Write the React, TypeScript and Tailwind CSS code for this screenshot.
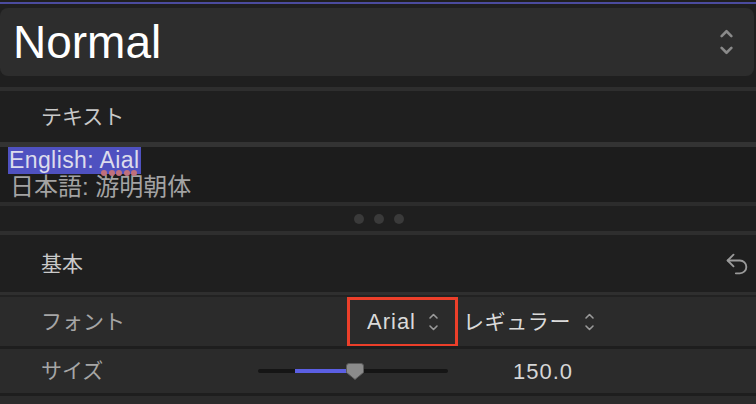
import React from 'react';

const latin = { fontFamily: '"Liberation Sans", Arial, sans-serif' };
const jp = { fontFamily: '"Liberation Sans", "Noto Sans CJK JP", sans-serif' };

function UpDown({ className = '' }: { className?: string }) {
  return (
    <svg viewBox="0 0 12 26" fill="none" stroke="currentColor" strokeWidth="2.4" strokeLinecap="round" strokeLinejoin="round" className={className}>
      <path d="M1.5 7.5 6 3l4.5 4.5" />
      <path d="M1.5 18.5 6 23l4.5-4.5" />
    </svg>
  );
}

function SmallUpDown({ className = '' }: { className?: string }) {
  return (
    <svg viewBox="0 0 10 20" fill="none" stroke="currentColor" strokeWidth="1.6" strokeLinecap="round" strokeLinejoin="round" className={className}>
      <path d="M1.5 6 5 2.5 8.5 6" />
      <path d="M1.5 14 5 17.5 8.5 14" />
    </svg>
  );
}

function UndoIcon({ className = '' }: { className?: string }) {
  return (
    <svg viewBox="0 0 24 24" fill="none" stroke="currentColor" strokeWidth="1.6" strokeLinecap="round" strokeLinejoin="round" className={className}>
      <path d="M9 14 4 9l5-5" />
      <path d="M4 9h10.5a5.5 5.5 0 0 1 5.5 5.5a5.5 5.5 0 0 1-5.5 5.5H11" />
    </svg>
  );
}

function SliderThumb() {
  return (
    <svg viewBox="0 0 18 17" className="absolute left-[88px] top-[4px] w-[18px] h-[17px]">
      <path d="M3 0.5h12a2.5 2.5 0 0 1 2.5 2.5v6.5L9 16.5 0.5 9.5V3A2.5 2.5 0 0 1 3 0.5z" fill="#8b8b8b" stroke="#5a5a5a" strokeWidth="1" />
    </svg>
  );
}

export default function App() {
  return (
    <div className="w-[756px] h-[404px] overflow-hidden bg-[#1f1f1f] flex flex-col" style={jp}>
      {/* top accent */}
      <div className="h-[2px] mt-[2px] bg-[#4b4b9e]" />

      {/* style dropdown */}
      <div className="mt-[4px] mr-[2px] h-[68px] rounded-[8px] bg-[#2d2d2d] flex items-center justify-between pl-[13px] pr-[21px]">
        <span className="text-[46px] leading-none text-white" style={latin}>Normal</span>
        <UpDown className="w-[13px] h-[28px] text-[#8a8a8a]" />
      </div>

      <div className="mt-[11px] h-[4px] bg-[#2e2e2e]" />

      {/* text section header */}
      <div className="h-[51px] flex items-center pl-[41px] text-[21px] text-[#c9c9c9]">テキスト</div>
      <div className="h-[5px] bg-[#333333]" />

      {/* text editor */}
      <div className="h-[55px] bg-[#1c1c1c] flex flex-col">
        <div className="h-[27px] flex">
          <span className="relative ml-[8px] h-[27px] px-[1px] bg-[#4f51c0] text-[23px] tracking-[0.4px] leading-[27px] text-[#dcdcec]" style={latin}>
            English: Aial
            <span className="absolute left-[93px] bottom-[-2px] flex gap-[1.5px]">
              <span className="w-[6px] h-[6px] rounded-full bg-[#c0707c]" />
              <span className="w-[6px] h-[6px] rounded-full bg-[#c0707c]" />
              <span className="w-[6px] h-[6px] rounded-full bg-[#c0707c]" />
              <span className="w-[6px] h-[6px] rounded-full bg-[#c0707c]" />
              <span className="w-[6px] h-[6px] rounded-full bg-[#c0707c]" />
            </span>
          </span>
        </div>
        <div className="ml-[10px] text-[24px] leading-[26px] text-[#a3a3a3]">日本語: 游明朝体</div>
      </div>
      <div className="h-[4px] bg-[#2c2c2c]" />

      {/* resize handle */}
      <div className="h-[25px] flex items-center justify-center gap-[10px] pl-[2px]">
        <span className="w-[10px] h-[10px] rounded-full bg-[#3a3a3a]" />
        <span className="w-[10px] h-[10px] rounded-full bg-[#3a3a3a]" />
        <span className="w-[10px] h-[10px] rounded-full bg-[#3a3a3a]" />
      </div>
      <div className="h-[4px] bg-[#2e2e2e]" />

      {/* basic section header */}
      <div className="h-[57px] flex items-center justify-between pl-[41px] pr-[5px]">
        <span className="text-[21px] text-[#c9c9c9]">基本</span>
        <UndoIcon className="w-[28px] h-[28px] text-[#9a9a9a]" />
      </div>
      <div className="h-[3px] bg-[#2f2f2f]" />
      <div className="h-[2px] bg-[#222222]" />

      {/* font row */}
      <div className="h-[49px] bg-[#2b2b2b] flex items-center">
        <div className="w-[347px] pl-[41px] text-[21px] text-[#a6a6a6]">フォント</div>
        <div className="w-[111px] h-[50px] border-[3px] border-[#ec3f2a] flex items-center pl-[17px] gap-[12px]">
          <span className="text-[22px] tracking-[1px] text-[#dadada]" style={latin}>Arial</span>
          <SmallUpDown className="w-[11px] h-[20px] text-[#9a9a9a]" />
        </div>
        <div className="ml-[5px] flex items-center gap-[13px]">
          <span className="text-[21px] tracking-[0.6px] text-[#dadada]">レギュラー</span>
          <SmallUpDown className="w-[11px] h-[20px] text-[#9a9a9a]" />
        </div>
      </div>
      <div className="h-[3px] bg-[#1e1e1e]" />

      {/* size row */}
      <div className="h-[44px] bg-[#2b2b2b] flex items-center">
        <div className="w-[258px] pl-[41px] text-[21px] text-[#a6a6a6]">サイズ</div>
        <div className="relative w-[190px] h-[24px] flex items-center">
          <div className="w-full h-[4px] rounded-full bg-[#151515]" />
          <div className="absolute left-[37px] top-[10px] w-[58px] h-[4px] bg-[#5b5fe3]" />
          <SliderThumb />
        </div>
        <span className="ml-[65px] text-[22px] tracking-[1px] text-[#d6d6d6]" style={latin}>150.0</span>
      </div>
      <div className="h-[3px] bg-[#1e1e1e]" />
      <div className="flex-1 bg-[#2b2b2b]" />
    </div>
  );
}
